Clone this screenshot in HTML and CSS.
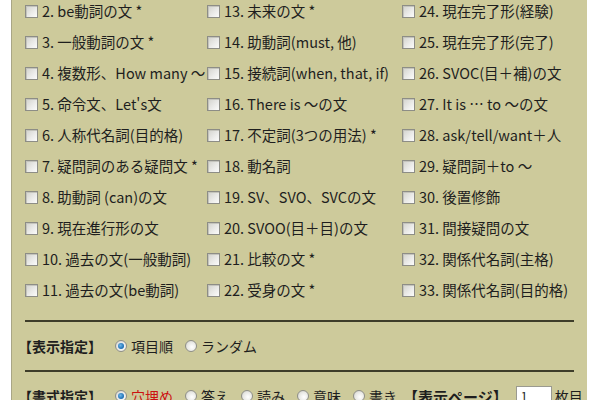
FILE: index.html
```html
<!DOCTYPE html>
<html lang="ja">
<head>
<meta charset="utf-8">
<link rel="stylesheet" href="styles.css">
</head>
<body>
<div class="panel">
  <div class="grid">
    <label class="item"><span class="cb"></span>2. be動詞の文 *</label>
    <label class="item"><span class="cb"></span>13. 未来の文 *</label>
    <label class="item"><span class="cb"></span>24. 現在完了形(経験)</label>

    <label class="item"><span class="cb"></span>3. 一般動詞の文 *</label>
    <label class="item"><span class="cb"></span>14. 助動詞(must, 他)</label>
    <label class="item"><span class="cb"></span>25. 現在完了形(完了)</label>

    <label class="item"><span class="cb"></span>4. 複数形、How many ～</label>
    <label class="item"><span class="cb"></span>15. 接続詞(when, that, if)</label>
    <label class="item"><span class="cb"></span>26. SVOC(目＋補)の文</label>

    <label class="item"><span class="cb"></span>5. 命令文、Let's文</label>
    <label class="item"><span class="cb"></span>16. There is ～の文</label>
    <label class="item"><span class="cb"></span>27. It is … to ～の文</label>

    <label class="item"><span class="cb"></span>6. 人称代名詞(目的格)</label>
    <label class="item"><span class="cb"></span>17. 不定詞(3つの用法) *</label>
    <label class="item"><span class="cb"></span>28. ask/tell/want＋人</label>

    <label class="item"><span class="cb"></span>7. 疑問詞のある疑問文 *</label>
    <label class="item"><span class="cb"></span>18. 動名詞</label>
    <label class="item"><span class="cb"></span>29. 疑問詞＋to ～</label>

    <label class="item"><span class="cb"></span>8. 助動詞 (can)の文</label>
    <label class="item"><span class="cb"></span>19. SV、SVO、SVCの文</label>
    <label class="item"><span class="cb"></span>30. 後置修飾</label>

    <label class="item"><span class="cb"></span>9. 現在進行形の文</label>
    <label class="item"><span class="cb"></span>20. SVOO(目＋目)の文</label>
    <label class="item"><span class="cb"></span>31. 間接疑問の文</label>

    <label class="item"><span class="cb"></span>10. 過去の文(一般動詞)</label>
    <label class="item"><span class="cb"></span>21. 比較の文 *</label>
    <label class="item"><span class="cb"></span>32. 関係代名詞(主格)</label>

    <label class="item"><span class="cb"></span>11. 過去の文(be動詞)</label>
    <label class="item"><span class="cb"></span>22. 受身の文 *</label>
    <label class="item"><span class="cb"></span>33. 関係代名詞(目的格)</label>
  </div>

  <div class="rule"></div>

  <div class="opts">
    <span class="head">【表示指定】</span>
    <span class="rd on"></span><span class="opt">項目順</span>
    <span class="rd"></span><span class="opt">ランダム</span>
  </div>

  <div class="rule rule2"></div>

  <div class="opts">
    <span class="head">【書式指定】</span>
    <span class="rd on"></span><span class="opt red">穴埋め</span>
    <span class="rd"></span><span class="opt">答え</span>
    <span class="rd"></span><span class="opt">読み</span>
    <span class="rd"></span><span class="opt">意味</span>
    <span class="rd"></span><span class="opt last">書き</span>
    <span class="head head2">【表示ページ】</span>
    <span class="page">1</span>
    <span class="unit">枚目</span>
  </div>
</div>
</body>
</html>
```

FILE: styles.css
```css
html, body {
  margin: 0;
  padding: 0;
  background: #ffffff;
  overflow: hidden;
}

body {
  font-family: "Noto Sans CJK JP", "Noto Sans", sans-serif;
  color: #1e1e1e;
  font-size: 14.5px;
}

.panel {
  margin-left: 11px;
  width: 575px;
  height: 420px;
  background: #cdca9b;
  border-left: 1px solid #a9a686;
}

.grid {
  display: grid;
  grid-template-columns: 182px 195px 1fr;
  grid-auto-rows: 31px;
  margin-top: -4px;
  padding-left: 13px;
}

.item {
  display: flex;
  align-items: center;
  white-space: nowrap;
  line-height: 1;
}

.cb {
  flex: none;
  width: 11px;
  height: 11px;
  margin-right: 4px;
  border: 1px solid #8d8d86;
  background: linear-gradient(135deg, #d2d2cc 0%, #ececea 60%, #fbfbfa 100%);
  box-shadow: inset 1px 1px 0 #c4c4bd;
}

.rule {
  height: 2px;
  margin: 14px 13px 0 13px;
  background: #3e3d2a;
}

.rule2 {
  margin-top: 12px;
}

.opts {
  display: flex;
  align-items: center;
  height: 24px;
  margin-top: 12px;
  padding-left: 6px;
  font-size: 14px;
  white-space: nowrap;
}

.head {
  font-weight: bold;
  margin-right: 13px;
}

.head2 {
  font-size: 15px;
  margin-right: 8px;
}

.rd {
  flex: none;
  width: 10px;
  height: 10px;
  border-radius: 50%;
  border: 1px solid #8f8f88;
  background: radial-gradient(circle at 60% 60%, #ffffff 0%, #e8e8e4 55%, #c9c9c2 100%);
  margin-right: 4px;
  position: relative;
}

.rd.on::after {
  content: "";
  position: absolute;
  left: 2px;
  top: 2px;
  width: 6px;
  height: 6px;
  border-radius: 50%;
  background: radial-gradient(circle at 40% 40%, #6fb6e8 0%, #1a6db3 70%, #0d4f8a 100%);
}

.opt {
  margin-right: 12px;
}

.opt.last {
  margin-right: 6px;
}

.red {
  color: #cc1111;
}

.page {
  flex: none;
  width: 36px;
  height: 20px;
  background: #ffffff;
  border: 1px solid #9a9a90;
  font-size: 12px;
  line-height: 18px;
  padding-left: 4px;
  box-sizing: border-box;
  margin-right: 3px;
}

.unit {
  font-size: 14px;
}
```
